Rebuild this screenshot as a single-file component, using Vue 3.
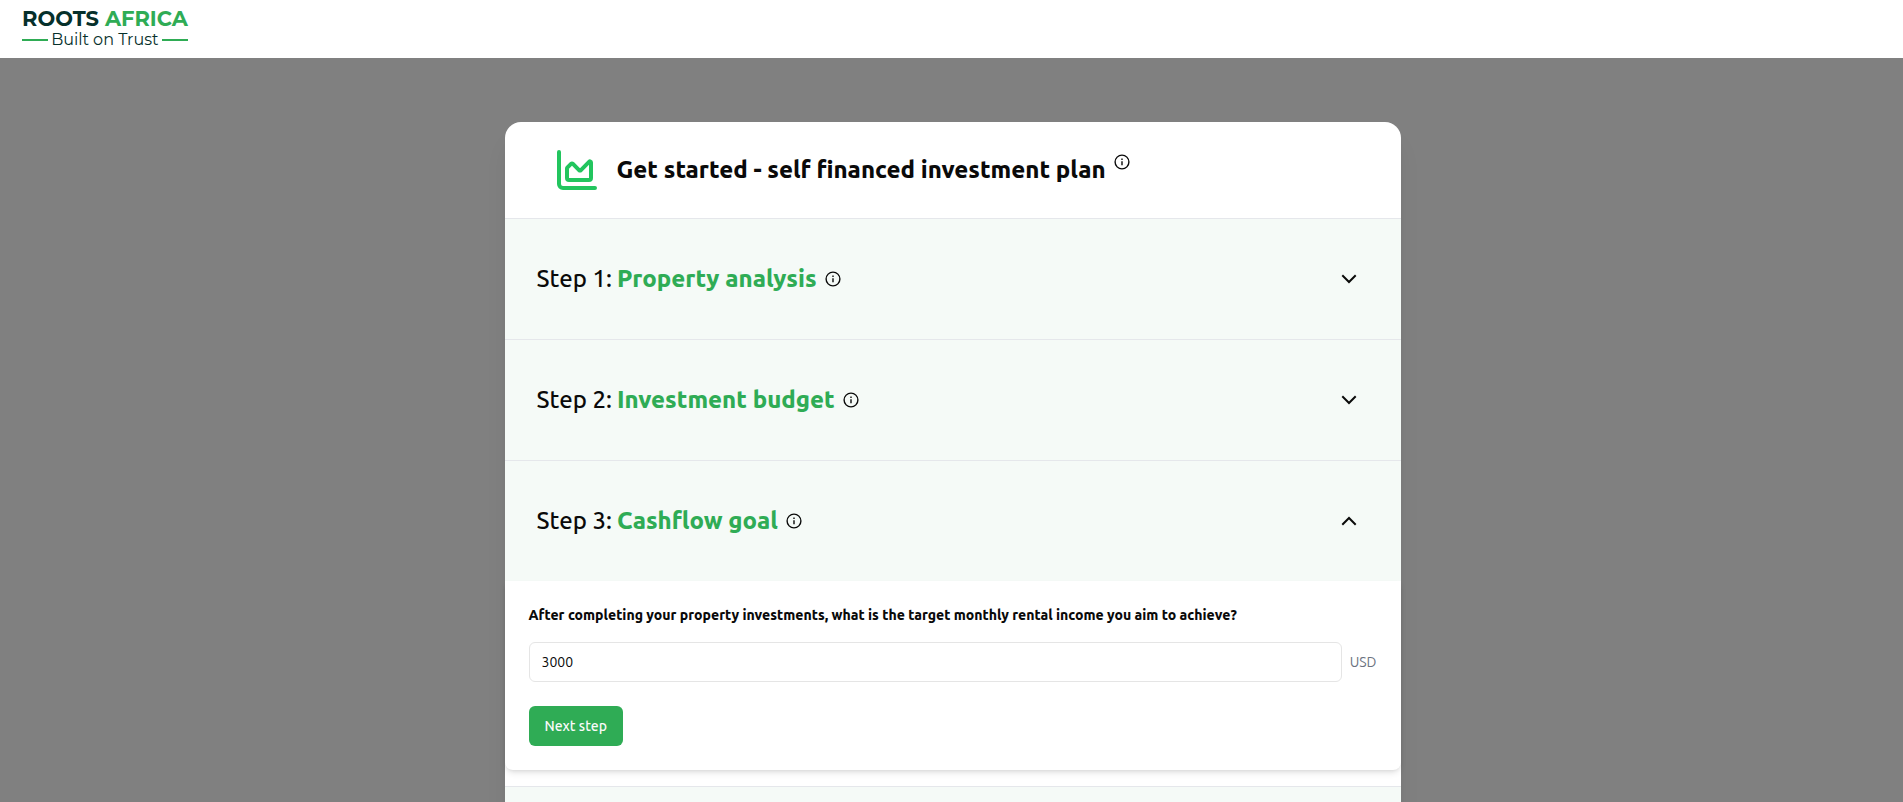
<script setup>
import { ref } from 'vue';

const steps = ref([
    { id: 1, title: 'Property analysis', open: false },
    { id: 2, title: 'Investment budget', open: false },
    { id: 3, title: 'Cashflow goal', open: true },
]);

const income = ref('3000');

function toggle(step) {
    step.open = !step.open;
}

function nextStep() {
    steps.value[2].open = false;
}
</script>
<template>
    <div class="page">
        <header class="navbar">
            <a href="#" class="logo">
                <span class="logo-name">ROOTS <span class="green">AFRICA</span></span>
                <span class="logo-tagline">Built on Trust</span>
            </a>
        </header>

        <main class="content">
            <section class="card">
                <div class="card-header">
                    <svg class="chart-icon" viewBox="0 0 24 24">
                        <path d="M3 3v16a2 2 0 0 0 2 2h16" />
                        <path d="M7 11.207a.5.5 0 0 1 .146-.353l2-2a.5.5 0 0 1 .708 0l3.292 3.292a.5.5 0 0 0 .708 0l4.292-4.292a.5.5 0 0 1 .854.353V16a1 1 0 0 1-1 1H8a1 1 0 0 1-1-1z" />
                    </svg>
                    <h1 class="card-title">Get started - self financed investment plan</h1>
                    <svg class="info-icon raised" viewBox="0 0 16 16">
                        <circle cx="8" cy="8" r="6.9" />
                        <path d="M8 7.2v4M8 4.6v1.4" />
                    </svg>
                </div>

                <div v-for="step in steps" :key="step.id" class="step">
                    <button type="button" class="step-header" @click="toggle(step)">
                        <span class="step-number">Step {{ step.id }}:</span>
                        <span class="step-title">{{ step.title }}</span>
                        <svg class="info-icon" viewBox="0 0 16 16">
                            <circle cx="8" cy="8" r="6.9" />
                            <path d="M8 7.2v4M8 4.6v1.4" />
                        </svg>
                        <svg class="chevron" viewBox="0 0 24 24">
                            <path :d="step.open ? 'm6 15 6-6 6 6' : 'm6 9 6 6 6-6'" />
                        </svg>
                    </button>

                    <form v-if="step.open" class="step-body" @submit.prevent="nextStep">
                        <label for="income" class="question">After completing your property investments, what is the target monthly rental income you aim to achieve?</label>
                        <div class="input-row">
                            <input id="income" v-model="income" type="text" class="input" />
                            <span class="currency">USD</span>
                        </div>
                        <button type="submit" class="btn-next">Next step</button>
                    </form>
                </div>

                <div class="step step-next"></div>
            </section>
        </main>
    </div>
</template>
<style>
body {
    margin: 0;
    overflow: hidden;
}
</style>
<style scoped>
.page {
    height: 100vh;
    overflow: hidden;
    background: #808080;
    color: #0a0a0a;
    font-family: Ubuntu, "Noto Sans", sans-serif;
}

.page * {
    box-sizing: border-box;
}

.navbar {
    height: 58px;
    padding: 8px 22px;
    background: #fff;
}

.logo {
    display: inline-flex;
    flex-direction: column;
    color: #06302b;
    text-decoration: none;
}

.logo-name {
    font-family: Montserrat, "DejaVu Sans", sans-serif;
    font-size: 21px;
    font-weight: 700;
    line-height: 22px;
}

.green {
    color: #2fac55;
}

.logo-tagline {
    display: flex;
    align-items: center;
    gap: 3px;
    font-family: Montserrat, Inter, sans-serif;
    font-size: 16px;
    line-height: 20px;
    white-space: nowrap;
}

.logo-tagline::before,
.logo-tagline::after {
    content: "";
    flex: 1;
    height: 2px;
    background: #2fac55;
}

.content {
    padding: 64px 16px 64px 18px;
}

.card {
    max-width: 896px;
    margin: 0 auto;
    background: #fff;
    border-radius: 16px;
    box-shadow: 0 20px 25px -5px rgba(0, 0, 0, 0.1), 0 8px 10px -6px rgba(0, 0, 0, 0.1);
}

.card-header {
    display: flex;
    align-items: center;
    padding: 24px 48px;
}

.chart-icon {
    width: 48px;
    height: 48px;
    margin-right: 16px;
    fill: none;
    stroke: #22c55e;
    stroke-width: 2;
    stroke-linecap: round;
    stroke-linejoin: round;
}

.card-title {
    margin: 0;
    font-size: 24px;
    font-weight: 800;
    line-height: 32px;
}

.info-icon {
    width: 16px;
    height: 16px;
    margin-left: 8px;
    fill: none;
    stroke: #0a0a0a;
    stroke-width: 1.4;
}

.raised {
    margin-bottom: 16px;
}

.step {
    border-top: 1px solid #e5e7eb;
}

.step-header {
    display: flex;
    align-items: center;
    width: 100%;
    height: 120px;
    padding: 0 40px 0 32px;
    border: none;
    background: #f5faf7;
    color: inherit;
    font-family: inherit;
    font-size: 24px;
    line-height: 32px;
    cursor: pointer;
}

.step-number {
    margin-right: 5px;
    font-weight: 500;
}

.step-title {
    color: #2fac55;
    font-weight: 800;
}

.chevron {
    width: 24px;
    height: 24px;
    margin-left: auto;
    fill: none;
    stroke: #0a0a0a;
    stroke-width: 2;
    stroke-linecap: square;
}

.step-body {
    padding: 24px;
    margin-bottom: 16px;
    border-radius: 0 0 8px 8px;
    box-shadow: 0 4px 6px -1px rgba(0, 0, 0, 0.1), 0 2px 4px -2px rgba(0, 0, 0, 0.1);
    font-size: 14px;
}

.question {
    display: block;
    margin-bottom: 16px;
    font-weight: 800;
    line-height: 21px;
}

.input-row {
    display: flex;
    align-items: center;
    gap: 8px;
    margin-bottom: 24px;
}

.input {
    flex: 1;
    min-width: 0;
    height: 40px;
    padding: 0 12px;
    border: 1px solid #e5e5e5;
    border-radius: 6px;
    background: #fff;
    color: inherit;
    font-family: inherit;
    font-size: 14px;
}

.currency {
    color: #6b7280;
}

.btn-next {
    display: block;
    height: 40px;
    padding: 0 16px;
    border: none;
    border-radius: 6px;
    background: #2fac55;
    color: #fafafa;
    font-family: inherit;
    font-size: 14px;
    font-weight: 500;
    cursor: pointer;
}

.step-next {
    height: 121px;
    background: #f5faf7;
}
</style>
